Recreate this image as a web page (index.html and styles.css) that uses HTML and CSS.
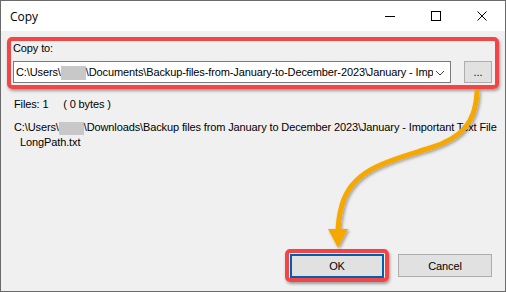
FILE: index.html
```html
<!DOCTYPE html>
<html>
<head>
<meta charset="utf-8">
<link rel="stylesheet" href="styles.css">
</head>
<body>
<div class="window">
  <div class="titlebar">
    <span class="title">Copy</span>
    <div class="controls">
      <span class="ctl"><svg width="12" height="12" viewBox="0 0 12 12"><path d="M1 6.5h10" stroke="#000" stroke-width="1"/></svg></span>
      <span class="ctl"><svg width="12" height="12" viewBox="0 0 12 12"><rect x="1.5" y="1.5" width="9" height="9" fill="none" stroke="#000" stroke-width="1"/></svg></span>
      <span class="ctl"><svg width="12" height="12" viewBox="0 0 12 12"><path d="M1.5 1.5l9 9M10.5 1.5l-9 9" stroke="#000" stroke-width="1"/></svg></span>
    </div>
  </div>
  <div class="content">
    <div class="highlight">
      <div class="label">Copy to:</div>
      <div class="row">
        <div class="combo">
          <div class="combo-text">C:\Users\<span class="redact"></span>\Documents\Backup-files-from-January-to-December-2023\January - Important Text File</div>
          <svg class="chev" width="10" height="6" viewBox="0 0 10 6"><path d="M1 1l4 4 4-4" fill="none" stroke="#444" stroke-width="1"/></svg>
        </div>
        <div class="btn browse">...</div>
      </div>
    </div>
    <div class="files">Files: 1&nbsp;&nbsp;&nbsp;&nbsp;&nbsp;( 0 bytes )</div>
    <div class="path">C:\Users\<span class="redact"></span>\Downloads\Backup files from January to December 2023\January - Important Text File<br><span class="indent">LongPath.txt</span></div>
    <div class="buttons">
      <div class="ok-hl"><div class="btn ok">OK</div></div>
      <div class="btn cancel">Cancel</div>
    </div>
  </div>
  <svg class="arrow" width="506" height="292" viewBox="0 0 506 292">
    <defs>
      <filter id="sh" x="-20%" y="-20%" width="140%" height="140%">
        <feDropShadow dx="1.5" dy="1.5" stdDeviation="1.5" flood-color="#000" flood-opacity="0.35"/>
      </filter>
    </defs>
    <g filter="url(#sh)">
      <path d="M477 92 C476 122 462 138 430 148 C392 160 352 168 342 205 C339 216 338 224 338 232" fill="none" stroke="#f6a800" stroke-width="5" stroke-linecap="round"/>
      <path d="M328 229 L348 229 L338 248 Z" fill="#f6a800"/>
    </g>
  </svg>
</div>
</body>
</html>
```
FILE: styles.css
```css
* { box-sizing: border-box; }
html, body { margin: 0; padding: 0; }
body { width: 506px; height: 292px; overflow: hidden; background: #f0f0f0; }
.window {
  position: relative;
  width: 506px; height: 292px;
  border: 1px solid #6a6a6a;
  background: #f0f0f0;
  display: flex; flex-direction: column;
  font-family: "Liberation Sans", Arial, sans-serif;
  font-size: 11px; color: #000;
  letter-spacing: -0.12px;
}
.titlebar {
  height: 30px; background: #fff;
  display: flex; align-items: center; justify-content: space-between;
  padding-left: 9px;
}
.title { font-family: "Open Sans", "Noto Sans", sans-serif; font-size: 12px; color: #000; margin-top: 1px; letter-spacing: 0; }
.controls { display: flex; height: 100%; }
.ctl { width: 46px; height: 100%; display: flex; align-items: center; justify-content: center; }
.content { flex: 1; display: flex; flex-direction: column; padding: 6px 6px 0 6px; }
.highlight {
  width: 492px; height: 52px;
  border: 4px solid #f24646; border-radius: 5px;
  box-shadow: 1px 2px 3px rgba(0,0,0,0.35);
  padding: 1px 3px 0 2px;
}
.label { height: 14px; line-height: 12px; }
.row { display: flex; align-items: center; justify-content: space-between; margin-top: 5px; }
.combo {
  width: 438px; height: 22px; background: #fff; border: 1px solid #7a7a7a;
  display: flex; align-items: center; padding-left: 2px; position: relative; overflow: hidden;
}
.combo-text { white-space: nowrap; overflow: hidden; width: 417px; flex-shrink: 0; line-height: 14px; margin-top: 1px; }
.redact { display: inline-block; width: 25px; height: 14px; background: #c8c8c8; vertical-align: middle; }
.chev { position: absolute; right: 5px; top: 8px; }
.btn {
  background: #e1e1e1; border: 1px solid #adadad;
  display: flex; align-items: center; justify-content: center;
}
.browse { width: 28px; height: 22px; }
.files { margin-top: 8px; padding-left: 7px; height: 14px; line-height: 14px; }
.path { margin-top: 9px; padding-left: 7px; line-height: 14px; white-space: nowrap; }
.path .redact { height: 13px; }
.indent { padding-left: 6px; }
.buttons { margin-top: auto; margin-bottom: 9px; display: flex; align-items: center; justify-content: flex-end; padding-right: 7px; gap: 9px; }
.ok-hl {
  border: 4px solid #f24646; border-radius: 5px; padding: 0;
  box-shadow: 1px 2px 3px rgba(0,0,0,0.35);
  width: 104px; height: 33px;
  display: flex; align-items: center; justify-content: center;
}
.ok { width: 94px; height: 24px; border: 2px solid #0060b0; }
.cancel { width: 94px; height: 23px; }
.arrow { position: absolute; left: -1px; top: -1px; pointer-events: none; }
```
